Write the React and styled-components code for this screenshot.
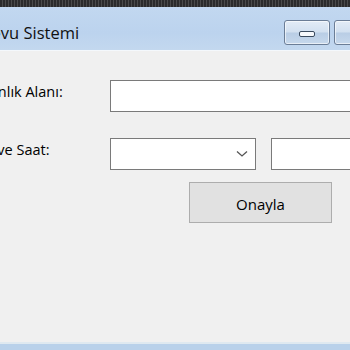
import React from 'react';
import styled, { createGlobalStyle } from "styled-components";

const GlobalStyle = createGlobalStyle`
    html, body{
        margin:0;
        padding:0;
        width:350px;
        height:350px;
        overflow:hidden;
        background:#f0f0f0;
        font-family:"Open Sans", "Noto Sans", sans-serif;
    }
`;

const Window = styled.div`
    width:445px;
    height:350px;
    margin-left:-60px;
    display:flex;
    flex-direction:column;
    background:#f0f0f0;
`;
const Frame = styled.div`
    height:7px;
    background:repeating-linear-gradient(90deg, #2b2b2b 0px, #2b2b2b 2px, #4a4a4a 2px, #4a4a4a 3px);
`;
const TitleBar = styled.div`
    height:43px;
    display:flex;
    align-items:flex-start;
    padding:0 3px 0 12px;
    background:linear-gradient(180deg, #c2d8f0 0%, #bcd3ee 60%, #c3d8ef 100%);
    border-bottom:1px solid #f4f8fc;
`;
const Title = styled.span`
    flex:1;
    padding-top:15px;
    font-size:16.5px;
    line-height:22px;
    color:#111;
`;
const Controls = styled.div`
    display:flex;
    gap:4px;
    padding-top:13px;
`;
const CaptionButton = styled.div`
    width:${p => p.wide ? 46 : 44}px;
    height:23px;
    border:1px solid #6b7d96;
    border-radius:3px;
    display:flex;
    align-items:center;
    justify-content:center;
    background:linear-gradient(180deg, #e3ecf7 0%, #d2e0f0 48%, #b9cde5 52%, #c6d8ec 100%);
    box-shadow:inset 0 0 0 1px rgba(255,255,255,0.6);
`;
const MinGlyph = styled.div`
    width:14px;
    height:4px;
    margin-top:2px;
    border:1px solid #3b4b5f;
    border-radius:2px;
    background:#f7f9fc;
`;
const Content = styled.div`
    flex:1;
    padding:29px 0 0 19px;
    display:flex;
    flex-direction:column;
`;
const Row = styled.div`
    display:flex;
    align-items:flex-start;
    margin-bottom:${p => p.gap}px;
`;
const Label = styled.span`
    flex-shrink:0;
    width:151px;
    padding-top:2px;
    font-size:14.5px;
    line-height:20px;
    color:#000;
`;
const Fields = styled.div`
    display:flex;
    gap:15px;
    flex-shrink:0;
`;
const TextBox = styled.div`
    flex-shrink:0;
    width:${p => p.w}px;
    height:30px;
    background:#fff;
    border:1px solid #7a7a7a;
`;
const Combo = styled(TextBox)`
    display:flex;
    align-items:center;
    justify-content:flex-end;
    padding-right:7px;
    box-sizing:border-box;
    height:32px;
`;
const ButtonRow = styled.div`
    padding-left:230px;
`;
const Button = styled.div`
    width:143px;
    height:41px;
    padding-top:2px;
    box-sizing:border-box;
    display:flex;
    align-items:center;
    justify-content:center;
    background:#e1e1e1;
    border:1px solid #adadad;
    font-size:15px;
    color:#000;
`;
const BottomEdge = styled.div`
    height:9px;
    background:linear-gradient(180deg, #f0f0f0 0px, #f0f0f0 1px, #dfe9f0 1px, #dfe9f0 3px, #b9d1ea 3px);
`;

const App = () => {
    return (
        <>
            <GlobalStyle />
            <Window>
                <Frame />
                <TitleBar>
                    <Title>Randevu Sistemi</Title>
                    <Controls>
                        <CaptionButton><MinGlyph /></CaptionButton>
                        <CaptionButton wide />
                    </Controls>
                </TitleBar>
                <Content>
                    <Row gap={26}>
                        <Label>Uzmanlık Alanı:</Label>
                        <TextBox w={260} />
                    </Row>
                    <Row gap={12}>
                        <Label>Tarih ve Saat:</Label>
                        <Fields>
                            <Combo w={146}>
                                <svg width="12" height="8" viewBox="0 0 12 8">
                                    <path d="M1 1.5 L6 6 L11 1.5" fill="none" stroke="#555" strokeWidth="1.3" />
                                </svg>
                            </Combo>
                            <TextBox w={120} />
                        </Fields>
                    </Row>
                    <ButtonRow>
                        <Button>Onayla</Button>
                    </ButtonRow>
                </Content>
                <BottomEdge />
            </Window>
        </>
    );
}

export default App;
